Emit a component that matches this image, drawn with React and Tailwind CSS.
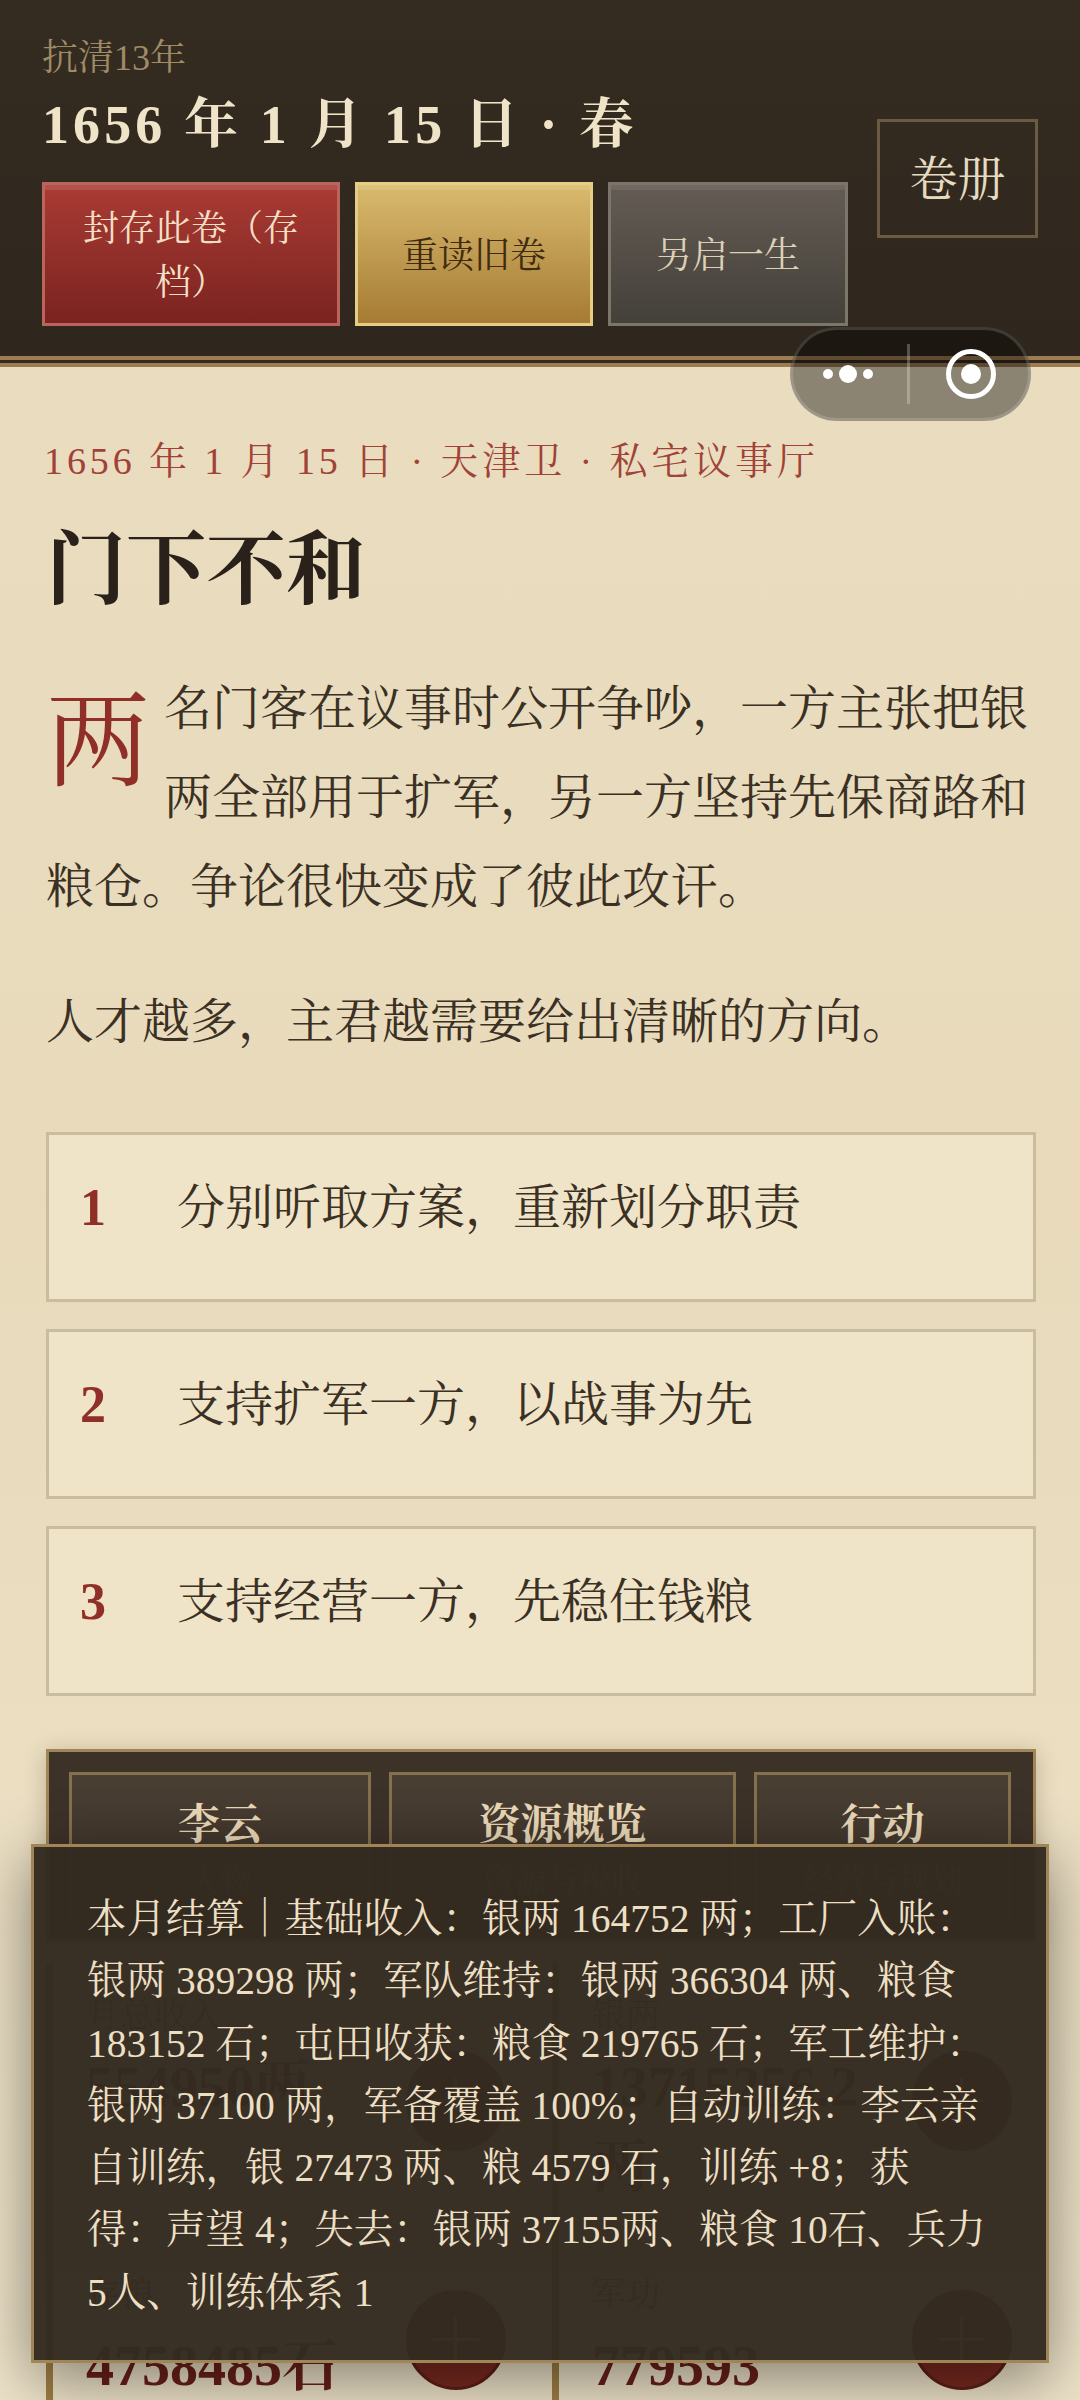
const serif = "font-['Liberation_Serif','Noto_Serif_CJK_SC','Noto_Sans_CJK_SC',serif]";

const options = [
  { n: 1, text: "分别听取方案，重新划分职责" },
  { n: 2, text: "支持扩军一方，以战事为先" },
  { n: 3, text: "支持经营一方，先稳住钱粮" },
];

const tabs = [
  { title: "李云", sub: "人物", width: "w-[302px]" },
  { title: "资源概览", sub: "资源与税收", width: "w-[347px]" },
  { title: "行动", sub: "经营与规划", width: "w-[257px]" },
];

const settlement = [
  "本月结算｜基础收入：银两 164752 两；工厂入账：",
  "银两 389298 两；军队维持：银两 366304 两、粮食",
  "183152 石；屯田收获：粮食 219765 石；军工维护：",
  "银两 37100 两，军备覆盖 100%；自动训练：李云亲",
  "自训练，银 27473 两、粮 4579 石，训练 +8；获",
  "得：声望 4；失去：银两 37155两、粮食 10石、兵力",
  "5人、训练体系 1",
];

function Header() {
  return (
    <header className="flex items-center justify-between h-[367px] pl-[42px] pr-[42px] bg-gradient-to-b from-[#342b21] to-[#2f271d] border-b-[11px] border-double border-[#9c7c50]">
      <div>
        <div className="text-[36px] leading-[54px] mt-[1px] text-[#a08b66]">抗清13年</div>
        <div className="text-[54px] leading-[70px] mt-[5px] font-bold tracking-[4.1px] text-[#f0e4c8]">
          1656 年 1 月 15 日 · 春
        </div>
        <div className="flex gap-[15px] mt-[22px]">
          <button className="w-[298px] h-[144px] pt-[3px] px-[30px] border-[3px] border-[#bb645c] bg-gradient-to-b from-[#aa3b34] to-[#7a2320] text-[36px] leading-[54px] text-[#f3dfc6] shadow-[inset_0_5px_0_rgba(255,255,255,0.12)]">
            封存此卷（存档）
          </button>
          <button className="w-[238px] h-[144px] pt-[3px] border-[3px] border-[#e6cd85] bg-gradient-to-b from-[#d9bb6e] to-[#a67b33] text-[36px] text-[#3f2b10] shadow-[inset_0_5px_0_rgba(255,255,255,0.1)]">
            重读旧卷
          </button>
          <button className="w-[240px] h-[144px] pt-[3px] border-[3px] border-[#7c756a] bg-gradient-to-b from-[#645c54] to-[#44403a] text-[36px] text-[#dcd0b8] shadow-[inset_0_5px_0_rgba(255,255,255,0.08)]">
            另启一生
          </button>
        </div>
      </div>
      <button className="w-[161px] h-[119px] pt-[3px] border-[3px] border-[#6b5b43] text-[48px] text-[#e6dac0]">卷册</button>
    </header>
  );
}

function Capsule() {
  return (
    <div className="absolute left-[790px] top-[327px] w-[241px] h-[94px] rounded-full bg-black/40 border-[3px] border-white/15 flex items-center">
      <div className="flex items-center justify-center gap-[6px] w-[115px] pr-[4px]">
        <span className="w-[10px] h-[10px] rounded-full bg-white" />
        <span className="w-[18px] h-[18px] rounded-full bg-white" />
        <span className="w-[10px] h-[10px] rounded-full bg-white" />
      </div>
      <span className="w-[3px] h-[60px] bg-white/25" />
      <div className="flex items-center justify-center w-[120px] pl-[4px]">
        <span className="flex items-center justify-center w-[50px] h-[50px] rounded-full border-[5px] border-white">
          <span className="w-[20px] h-[20px] rounded-full bg-white" />
        </span>
      </div>
    </div>
  );
}

function StatCard({ label, value, className }) {
  return (
    <div className={`flex justify-between border-l-[7px] border-[#a07f45] pl-[33px] pt-[35px] pb-[35px] ${className}`}>
      <div className="w-[290px]">
        <div className="text-[34px] leading-[36px] text-[#7a6a50]">{label}</div>
        <div className="text-[56px] leading-[80px] mt-[13px] font-bold text-[#6b201b]">{value}</div>
      </div>
      <span className="relative shrink-0 self-center -mt-[4px] w-[100px] h-[100px] rounded-full bg-[#7a2a20] border-[3px] border-[#5e1f18]">
        <span className="absolute left-[24px] top-[45px] w-[46px] h-[3px] bg-[#c9a86a]" />
        <span className="absolute left-[45px] top-[24px] w-[3px] h-[46px] bg-[#c9a86a]" />
      </span>
    </div>
  );
}

function Panel() {
  return (
    <section className="mt-[53px] w-[990px] h-[193px] p-[20px] border-[3px] border-[#a08556] bg-[#3d3228] shadow-[0_4px_20px_rgba(60,40,10,0.25)] flex gap-[18px]">
      {tabs.map((t) => (
        <div key={t.title} className={`${t.width} h-[150px] border-[3px] border-[#85704f] bg-gradient-to-b from-[#4a3f33] to-[#3a3027] text-center`}>
          <div className="text-[42px] leading-[60px] mt-[20px] font-bold text-[#ead9b8]">{t.title}</div>
          <div className="text-[32px] leading-[40px] mt-[6px] text-[#a08b66]">{t.sub}</div>
        </div>
      ))}
    </section>
  );
}

export default function App() {
  return (
    <div className={`${serif} relative w-[1080px] h-[2400px] overflow-hidden bg-gradient-to-b from-[#ebdec1] via-[#e8dabb] to-[#eee3c9]`}>
      <Header />
      <Capsule />
      <main className="pl-[46px] pr-[44px]">
        <div className="mt-[64px] -ml-[2px] text-[38px] leading-[60px] tracking-[3.9px] text-[#a14238]">
          1656 年 1 月 15 日 · 天津卫 · 私宅议事厅
        </div>
        <h1 className="mt-[34px] text-[80px] leading-[90px] font-bold text-[#2a221a]">门下不和</h1>
        <p className="mt-[49px] text-[48px] leading-[89px] text-[#3a3024]">
          <span className="float-left w-[104px] h-[130px] mt-[27px] mr-[14px] text-[104px] leading-[104px] text-[#8f2f28]">两</span>
          名门客在议事时公开争吵，一方主张把银两全部用于扩军，另一方坚持先保商路和粮仓。争论很快变成了彼此攻讦。
        </p>
        <p className="mt-[46px] text-[48px] leading-[89px] text-[#3a3024]">人才越多，主君越需要给出清晰的方向。</p>

        <div className="mt-[66px] flex flex-col gap-[27px]">
          {options.map((o) => (
            <div key={o.n} className="flex h-[170px] pt-[29px] pl-[31px] border-[3px] border-[#c9bc9f] bg-[#f0e4c8]">
              <span className="w-[97px] text-[52px] leading-[88px] font-bold text-[#8f2f28]">{o.n}</span>
              <span className="text-[48px] leading-[88px] text-[#3a3024]">{o.text}</span>
            </div>
          ))}
        </div>

        <Panel />

        <div className="grid grid-cols-[506px_484px] mt-[21px]">
          <StatCard label="月总收入" value="554950两" className="pr-[46px]" />
          <StatCard label="银两" value="13715256.2 两" className="pr-[24px]" />
          <StatCard label="存粮" value="4758485石" className="pr-[46px]" />
          <StatCard label="军功" value="779593" className="pr-[24px]" />
        </div>
      </main>

      <div className="absolute left-[31px] top-[1844px] w-[1018px] h-[519px] border-[3px] border-[#a08556] bg-[#332a20]/[0.97] pt-[41px] px-[53px] text-[39.5px] leading-[62.3px] text-[#ecdfc3] shadow-[0_16px_60px_rgba(0,0,0,0.45)]">
        {settlement.map((line) => (
          <div key={line} className="whitespace-nowrap">{line}</div>
        ))}
      </div>
    </div>
  );
}
